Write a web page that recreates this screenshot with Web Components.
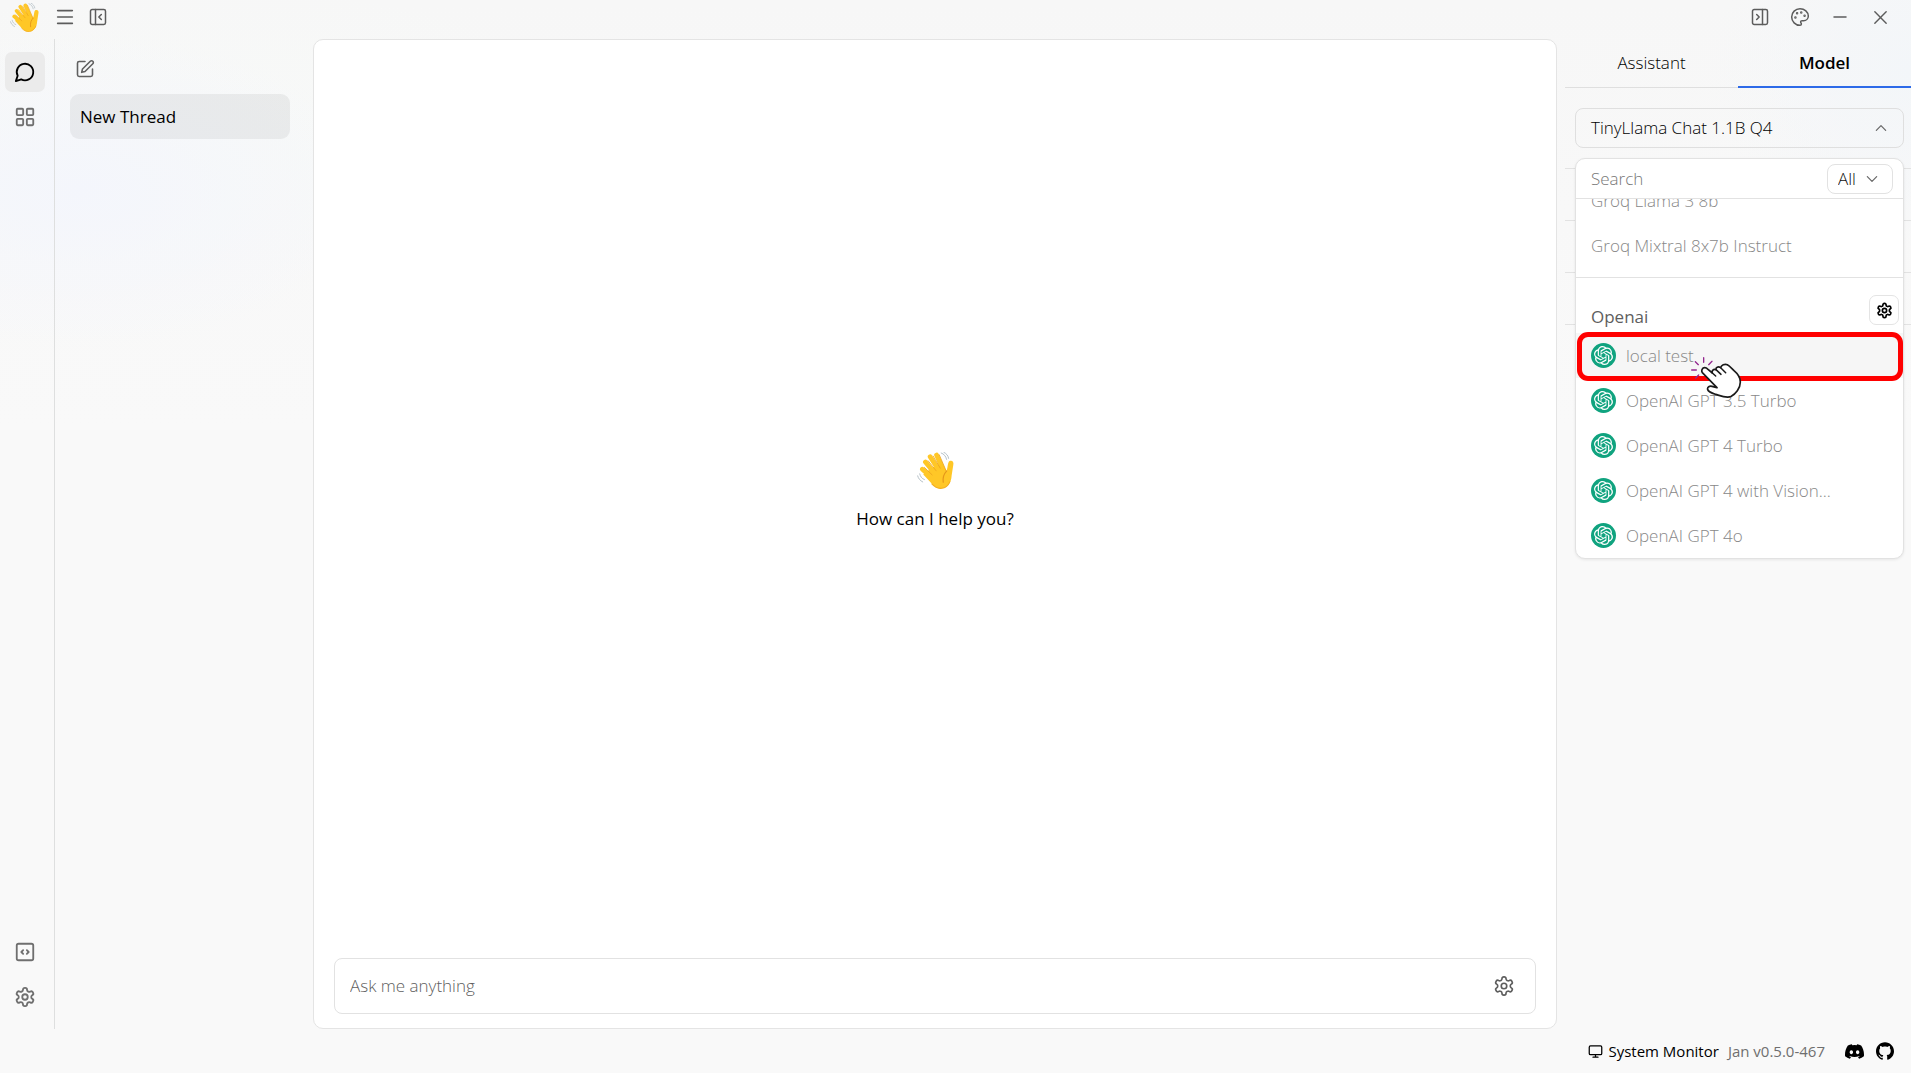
<!DOCTYPE html>
<html lang="en">
<head>
<meta charset="utf-8">
<title>Jan</title>
<style>
html,body{height:100%;margin:0}
body{font-family:"Open Sans","Noto Sans",sans-serif;font-size:17px;line-height:24px;color:#111;overflow:hidden}
</style>
</head>
<body>
<jan-app></jan-app>
<script>
const ICONS={
menu:'<path d="M4 5h16M4 12h16M4 19h16"/>',
panelLeft:'<rect x="3" y="3" width="18" height="18" rx="2"/><path d="M9 3v18M16 15l-3-3 3-3"/>',
panelRight:'<rect x="3" y="3" width="18" height="18" rx="2"/><path d="M15 3v18M8 9l3 3-3 3"/>',
palette:'<circle cx="13.5" cy="6.5" r=".6"/><circle cx="17.5" cy="10.5" r=".6"/><circle cx="8.5" cy="7.5" r=".6"/><circle cx="6.5" cy="12.5" r=".6"/><path d="M12 2C6.5 2 2 6.5 2 12s4.500 10 10 10c.926 0 1.648-.746 1.648-1.688 0-.437-.18-.835-.437-1.125-.29-.289-.438-.652-.438-1.125a1.640 1.640 0 0 1 1.668-1.668h1.996c3.051 0 5.555-2.503 5.555-5.554C21.965 6.012 17.461 2 12 2z"/>',
minus:'<path d="M4 12h16"/>',
close:'<path d="M4 4l16 16M20 4L4 20"/>',
chat:'<path d="M7.900 20A9 9 0 1 0 4 16.100L2 22Z"/>',
grid:'<rect x="3" y="3" width="7" height="7" rx="1"/><rect x="14" y="3" width="7" height="7" rx="1"/><rect x="14" y="14" width="7" height="7" rx="1"/><rect x="3" y="14" width="7" height="7" rx="1"/>',
code:'<path d="m10 10-2 2 2 2M14 14l2-2-2-2"/><rect x="3" y="3" width="18" height="18" rx="2"/>',
gear:'<path d="M12.220 2h-.44a2 2 0 0 0-2 2v.18a2 2 0 0 1-1 1.730l-.43.25a2 2 0 0 1-2 0l-.15-.08a2 2 0 0 0-2.730.73l-.22.38a2 2 0 0 0 .73 2.730l.15.1a2 2 0 0 1 1 1.720v.51a2 2 0 0 1-1 1.740l-.15.09a2 2 0 0 0-.73 2.730l.22.38a2 2 0 0 0 2.730.73l.15-.08a2 2 0 0 1 2 0l.43.25a2 2 0 0 1 1 1.730V20a2 2 0 0 0 2 2h.44a2 2 0 0 0 2-2v-.18a2 2 0 0 1 1-1.730l.43-.25a2 2 0 0 1 2 0l.15.08a2 2 0 0 0 2.730-.73l.22-.39a2 2 0 0 0-.73-2.730l-.15-.08a2 2 0 0 1-1-1.740v-.5a2 2 0 0 1 1-1.740l.15-.09a2 2 0 0 0 .73-2.730l-.22-.38a2 2 0 0 0-2.730-.73l-.15.08a2 2 0 0 1-2 0l-.43-.25a2 2 0 0 1-1-1.730V4a2 2 0 0 0-2-2z"/><circle cx="12" cy="12" r="3"/>',
edit:'<path d="M12 3H5a2 2 0 0 0-2 2v14a2 2 0 0 0 2 2h14a2 2 0 0 0 2-2v-7"/><path d="M18.375 2.625a2.121 2.121 0 1 1 3 3L12 15l-4 1 1-4Z"/>',
up:'<path d="m5 15.500 7-7 7 7"/>',
down:'<path d="m5 8.500 7 7 7-7"/>',
monitor:'<rect x="2" y="3" width="20" height="14" rx="2"/><path d="M8 21h8M12 17v4"/>'
};
const FILLED={
discord:'<path d="M20.317 4.370a19.791 19.791 0 0 0-4.885-1.515.074.074 0 0 0-.079.037c-.21.375-.444.864-.608 1.250a18.270 18.270 0 0 0-5.487 0 12.640 12.640 0 0 0-.617-1.250.077.077 0 0 0-.079-.037A19.736 19.736 0 0 0 3.677 4.370a.07.07 0 0 0-.032.027C.533 9.046-.32 13.580.099 18.058a.082.082 0 0 0 .031.057 19.900 19.900 0 0 0 5.993 3.030.078.078 0 0 0 .084-.028 14.090 14.090 0 0 0 1.226-1.994.076.076 0 0 0-.041-.106 13.107 13.107 0 0 1-1.872-.892.077.077 0 0 1-.008-.128c.126-.094.252-.192.372-.292a.074.074 0 0 1 .077-.01c3.928 1.793 8.180 1.793 12.062 0a.074.074 0 0 1 .078.01c.12.098.246.198.373.292a.077.077 0 0 1-.006.127 12.299 12.299 0 0 1-1.873.892.077.077 0 0 0-.041.107c.36.698.772 1.362 1.225 1.993a.076.076 0 0 0 .084.028 19.839 19.839 0 0 0 6.002-3.030.077.077 0 0 0 .032-.054c.5-5.177-.838-9.674-3.549-13.660a.061.061 0 0 0-.031-.03zM8.020 15.330c-1.183 0-2.157-1.085-2.157-2.419 0-1.333.956-2.419 2.157-2.419 1.210 0 2.176 1.096 2.157 2.420 0 1.333-.956 2.418-2.157 2.418zm7.975 0c-1.183 0-2.157-1.085-2.157-2.419 0-1.333.955-2.419 2.157-2.419 1.210 0 2.176 1.096 2.157 2.420 0 1.333-.946 2.418-2.157 2.418z"/>',
github:'<path d="M12 .297c-6.630 0-12 5.373-12 12 0 5.303 3.438 9.800 8.205 11.385.6.113.82-.258.82-.577 0-.285-.01-1.040-.015-2.040-3.338.724-4.042-1.610-4.042-1.610C4.422 18.070 3.633 17.700 3.633 17.700c-1.087-.744.084-.729.084-.729 1.205.084 1.838 1.236 1.838 1.236 1.070 1.835 2.809 1.305 3.495.998.108-.776.417-1.305.76-1.605-2.665-.3-5.466-1.332-5.466-5.930 0-1.310.465-2.380 1.235-3.220-.135-.303-.54-1.523.105-3.176 0 0 1.005-.322 3.300 1.230.96-.267 1.980-.399 3-.405 1.020.006 2.040.138 3 .405 2.280-1.552 3.285-1.230 3.285-1.230.645 1.653.24 2.873.12 3.176.765.84 1.230 1.910 1.230 3.220 0 4.610-2.805 5.625-5.475 5.920.42.36.81 1.096.81 2.220 0 1.606-.015 2.896-.015 3.286 0 .315.21.69.825.57C20.565 22.092 24 17.592 24 12.297c0-6.627-5.373-12-12-12"/>',
openai:'<path d="M22.282 9.821a5.985 5.985 0 0 0-.516-4.910 6.046 6.046 0 0 0-6.510-2.900A6.065 6.065 0 0 0 4.981 4.182a5.985 5.985 0 0 0-3.998 2.900 6.046 6.046 0 0 0 .743 7.097 5.980 5.980 0 0 0 .51 4.911 6.051 6.051 0 0 0 6.515 2.900A5.985 5.985 0 0 0 13.260 24a6.056 6.056 0 0 0 5.772-4.206 5.990 5.990 0 0 0 3.998-2.900 6.056 6.056 0 0 0-.748-7.073zM13.260 22.430a4.476 4.476 0 0 1-2.876-1.040l.141-.081 4.779-2.758a.795.795 0 0 0 .393-.681v-6.737l2.020 1.169a.071.071 0 0 1 .038.052v5.583a4.504 4.504 0 0 1-4.495 4.493zM3.600 18.304a4.470 4.470 0 0 1-.535-3.014l.142.085 4.783 2.759a.771.771 0 0 0 .78 0l5.843-3.369v2.332a.08.08 0 0 1-.033.062L9.740 19.950a4.500 4.500 0 0 1-6.140-1.646zM2.341 7.896a4.485 4.485 0 0 1 2.365-1.973V11.600a.766.766 0 0 0 .388.677l5.815 3.354-2.020 1.169a.076.076 0 0 1-.071 0l-4.830-2.787A4.504 4.504 0 0 1 2.341 7.872zm16.596 3.856l-5.833-3.388L15.119 7.200a.076.076 0 0 1 .071 0l4.830 2.791a4.494 4.494 0 0 1-.676 8.105v-5.678a.79.79 0 0 0-.407-.667zm2.011-3.024l-.142-.085-4.774-2.782a.776.776 0 0 0-.785 0L9.409 9.230V6.897a.066.066 0 0 1 .028-.061l4.830-2.787a4.500 4.500 0 0 1 6.681 4.660zM8.307 12.863l-2.020-1.164a.08.08 0 0 1-.038-.057V6.074a4.500 4.500 0 0 1 7.376-3.454l-.142.081L8.704 5.460a.795.795 0 0 0-.393.681zm1.097-2.365l2.602-1.500 2.607 1.500v2.999l-2.597 1.500-2.607-1.500z"/>'
};
const define=(name,html,setup)=>{
  const t=document.createElement('template');t.innerHTML=html;
  customElements.define(name,class extends HTMLElement{
    constructor(){super();this.attachShadow({mode:'open'}).append(t.content.cloneNode(true))}
    connectedCallback(){if(setup)setup(this,this.shadowRoot)}
  });
};
const RESET=':host,*{box-sizing:border-box}button,input,textarea,select{font:inherit;color:inherit;background:none;border:0;padding:0;margin:0;outline:0}button{display:flex;align-items:center;justify-content:center}';

/* <jan-icon name size weight> */
define('jan-icon','<style>:host{display:inline-flex;flex:none}svg{display:block}</style>',(el,root)=>{
  const n=el.getAttribute('name'),s=el.getAttribute('size')||20,w=el.getAttribute('weight')||2,f=FILLED[n];
  const s2=document.createElement('span');
  s2.innerHTML=`<svg aria-hidden="true" width="${s}" height="${s}" viewBox="0 0 24 24" ${f?'fill="currentColor"':`fill="none" stroke="currentColor" stroke-width="${w}" stroke-linecap="round" stroke-linejoin="round"`}>${f||ICONS[n]}</svg>`;
  root.append(s2.firstChild);
});

/* waving hand */
define('jan-wave',`<style>:host{display:block;flex:none;width:var(--size,37px);height:var(--size,37px)}svg{display:block;width:100%;height:100%}</style>
<svg viewBox="0 0 110 110" aria-hidden="true" fill="none" stroke-linecap="round" stroke-linejoin="round">
<g stroke="#ffc727" stroke-width="14"><path d="M16 51L50 82M25 30L60 72M39 14L70 62M58 9L80 58"/></g>
<path d="M30 64L36 50 72 38 88 56C92 44 91 30 97 27C105 24 110 30 108 38L103 70C102 92 90 109 70 109C56 109 47 98 38 88L18 66Z" fill="#ffc727"/>
<g stroke="#eda41f" stroke-width="2.500"><path d="M22 46L45 68M33 26L57 56M48 12L69 48M66 8L87 57"/></g>
<path d="M88 57C80 65 76 75 78 90" stroke="#e5971b" stroke-width="3.500"/>
<path d="M44 95C54 106 63 109 73 108C84 107 93 100 98 88" stroke="#f3ae20" stroke-width="3"/>
<g stroke="#a8b5bd" stroke-width="2.500"><path d="M72 3C80 6 86 12 88 22M80 1C88 5 93 11 94 19M2 71C4 79 9 85 17 89M8 65C10 73 14 79 22 82"/></g>
</svg>`);

define('title-bar',`<style>${RESET}
:host{display:flex;justify-content:space-between;height:39px;padding:0 21px 5px 10px;align-items:center;color:#5c5c5c}
div{display:flex;align-items:center}.l{gap:13px}.r{gap:20px}jan-wave{--size:29px;margin-right:3px}button{width:20px;height:20px}</style>
<div class="l"><jan-wave></jan-wave><button aria-label="Menu"><jan-icon name="menu" size="22" weight="1.800"></jan-icon></button><button aria-label="Collapse left panel"><jan-icon name="panelLeft" weight="1.800"></jan-icon></button></div>
<div class="r"><button aria-label="Collapse right panel"><jan-icon name="panelRight" weight="1.800"></jan-icon></button><button aria-label="Theme"><jan-icon name="palette" weight="1.800"></jan-icon></button><button aria-label="Minimize"><jan-icon name="minus" size="18"></jan-icon></button><button aria-label="Close"><jan-icon name="close" size="17"></jan-icon></button></div>`);

define('nav-rail',`<style>${RESET}
:host{display:flex;flex-direction:column;justify-content:space-between;width:55px;flex:none;padding:13px 9px 12px 5px;border-right:1px solid #dedfdf;color:#6f6f6f}
nav{display:flex;flex-direction:column;gap:5px}button{width:40px;height:40px;border-radius:7px}.on{background:#ebebeb;color:#000}</style>
<nav><button class="on" aria-label="Thread"><jan-icon name="chat" size="22"></jan-icon></button><button aria-label="Hub"><jan-icon name="grid" size="22"></jan-icon></button></nav>
<nav><button aria-label="Local API Server"><jan-icon name="code" size="22"></jan-icon></button><button aria-label="Settings"><jan-icon name="gear" size="22"></jan-icon></button></nav>`);

define('thread-list',`<style>${RESET}
:host{display:flex;flex-direction:column;align-items:stretch;width:248px;flex:none;padding:20px 13px 0 15px;gap:15px;color:#606060}
.new{width:20px;height:20px;margin-left:5px}.t{height:45px;padding:0 10px;border-radius:9px;background:rgba(0,0,0,.055);color:#000;justify-content:flex-start;font-weight:500}</style>
<button class="new" aria-label="New thread"><jan-icon name="edit" weight="1.900"></jan-icon></button><button class="t"><slot></slot></button>`);

define('chat-card',`<style>${RESET}
:host{display:flex;flex-direction:column;flex:1;min-width:0;background:#fff;border:1px solid #e4e4e4;border-radius:10px;padding:0 20px 14px}
.mid{flex:1;display:flex;flex-direction:column;align-items:center;justify-content:center;gap:18px;padding-bottom:16px;color:#000;font-weight:500}
.box{display:flex;align-items:center;height:56px;border:1px solid #e2e2e2;border-radius:8px;padding:0 20px 0 15px;color:#5e5e5e}
textarea{flex:1;height:24px;resize:none;overflow:hidden;font-weight:300}textarea::placeholder{color:#606060;opacity:1}
button{width:22px;height:22px}</style>
<div class="mid"><jan-wave></jan-wave><div>How can I help you?</div></div>
<div class="box"><textarea rows="1" aria-label="Message" placeholder="Ask me anything"></textarea><button aria-label="Chat settings"><jan-icon name="gear" size="22" weight="1.800"></jan-icon></button></div>`);

define('model-option',`<style>${RESET}
:host{display:block}button{width:100%;height:45px;padding:0 15px;gap:10px;justify-content:flex-start;color:#888;font-weight:300;white-space:nowrap}
:host([active]) button{background:#f6f6f6}
i{display:none;width:25px;height:25px;border-radius:50%;background:#10a37f;color:#fff;align-items:center;justify-content:center;flex:none}
:host([openai]) i{display:flex}</style>
<button role="option"><i><jan-icon name="openai" size="19"></jan-icon></i><span><slot></slot></span></button>`);

define('click-pointer',`<style>:host{display:block;width:52px;height:44px;pointer-events:none}svg{display:block}</style>
<svg width="52" height="44" viewBox="420 462 156 132" aria-hidden="true" stroke-linecap="round" stroke-linejoin="round">
<g stroke="#93278f" stroke-width="4" fill="none"><path d="M461 470v14M486 481l-10 10M436 482l9 9M425 507h14M446 522l-9 9"/></g>
<path d="M457 515C453 508 457 500 464 500C468 500 471 502 474 505L487 516C485 509 490 503 498 506C497 499 504 495 512 500C514 492 524 488 532 491C538 494 543 500 552 509C564 519 571 528 571 543C571 563 556 579 544 586C531 593 513 585 497 580C487 577 476 574 473 566C471 558 479 554 486 556L501 560Z" fill="#fff" stroke="#1a1a1a" stroke-width="5"/>
<path d="M487 516L497 525M498 506L513 520M512 500L527 515" fill="none" stroke="#1a1a1a" stroke-width="4.500"/>
</svg>`);

define('model-menu',`<style>${RESET}
:host{display:block;background:#fff;border:1px solid #e2e2e2;border-radius:10px;box-shadow:0 1px 3px rgba(0,0,0,.08)}
.search{display:flex;align-items:center;height:40px;border-bottom:1px solid #e2e2e2;padding:0 10px 0 15px}
input{flex:1;min-width:0;font-weight:300}input::placeholder{color:#777;opacity:1}
.sel{display:grid;align-items:center;width:66px;height:30px;border:1px solid #e2e2e2;border-radius:8px}
.sel>*{grid-area:1/1}select{appearance:none;width:100%;height:28px;padding-left:10px;color:#111;font-weight:300}.sel jan-icon{justify-self:end;margin-right:12px;color:#666;pointer-events:none}
.list{overflow:hidden;border-radius:0 0 10px 10px}.groq{margin-top:-21px;padding-bottom:9px;border-bottom:1px solid #e2e2e2}
.head{display:flex;justify-content:space-between;align-items:flex-start;height:55px;padding:17px 4px 0 15px}
h3{margin:10px 0 0;font-size:17px;line-height:24px;font-weight:500;color:#5e5e5e}
.head button{width:30px;height:30px;border:1px solid #e4e4e4;border-radius:7px;color:#000}
.hit{position:relative}
.ring{position:absolute;inset:-1px 0 -3px 1px;border:5px solid #f00;border-radius:11px;pointer-events:none}
click-pointer{position:absolute;left:114px;top:22px;z-index:2}</style>
<div class="search"><input aria-label="Search models" placeholder="Search"><label class="sel"><select aria-label="Filter"><option>All</option><option>Local</option><option>Remote</option></select><jan-icon name="down" size="16" weight="1.800"></jan-icon></label></div>
<div class="list" role="listbox" aria-label="Models">
<div class="groq"><model-option>Groq Llama 3 8b</model-option><model-option>Groq Mixtral 8x7b Instruct</model-option></div>
<div class="head"><h3>Openai</h3><button aria-label="Openai settings"><jan-icon name="gear" size="17" weight="2.400"></jan-icon></button></div>
<div class="hit"><model-option openai active>local test</model-option><div class="ring"></div><click-pointer></click-pointer></div>
<model-option openai>OpenAI GPT 3.5 Turbo</model-option><model-option openai>OpenAI GPT 4 Turbo</model-option><model-option openai>OpenAI GPT 4 with Vision...</model-option><model-option openai>OpenAI GPT 4o</model-option>
</div>`);

define('side-panel',`<style>${RESET}
:host{display:flex;flex-direction:column;width:346px;flex:none}
.tabs{display:flex;height:49px;border-bottom:1px solid #dfdfdf;color:#000}.tabs button{flex:1;font-weight:300;height:49px;padding-bottom:2px}.tabs .on{font-weight:600;padding:0;border-bottom:2px solid #2d6ae8}
.pick{position:relative;padding:20px 7px 20px 10px;border-bottom:1px solid #e2e2e2}
.cur{width:100%;height:40px;border:1px solid #dfdfdf;border-radius:8px;justify-content:space-between;padding:0 14px 0 15px;font-weight:300;color:#000}
.cur jan-icon{color:#666}.row{height:52px;border-bottom:1px solid #e2e2e2}
model-menu{position:absolute;top:70px;left:10px;right:7px}</style>
<div class="tabs" role="tablist"><button role="tab">Assistant</button><button role="tab" class="on" aria-selected="true">Model</button></div>
<div class="pick"><button class="cur" aria-expanded="true">TinyLlama Chat 1.1B Q4<jan-icon name="up" size="16" weight="1.800"></jan-icon></button><model-menu></model-menu></div>
<div class="row"></div><div class="row"></div><div class="row"></div>`);

define('status-bar',`<style>${RESET}
:host{display:flex;align-items:center;justify-content:flex-end;height:44px;padding:0 17px 0 0;font-size:15px;line-height:20px;color:#6f6f6f}
button{gap:5px;color:#000;font-weight:500}.v{margin:0 20px 0 9px}a{color:#000;display:flex}a+a{margin-left:12px}</style>
<button><jan-icon name="monitor" size="15"></jan-icon>System Monitor</button><span class="v">Jan v0.5.0-467</span><a href="#discord" aria-label="Discord"><jan-icon name="discord" size="19"></jan-icon></a><a href="#github" aria-label="GitHub"><jan-icon name="github" size="18"></jan-icon></a>`);

define('jan-app',`<style>
:host{display:flex;flex-direction:column;height:100vh;background:radial-gradient(ellipse 300px 160px at 80px 190px,#f4f6fc,transparent),radial-gradient(ellipse 200px 180px at 100% 70px,#f3f6f9,transparent),radial-gradient(ellipse 420px 150px at 200px 130px,#f7f9f8,transparent),linear-gradient(#f7f7f7,#f9f9f9 40%)}
main{display:flex;flex:1;min-height:0}chat-card{margin:0 8px 0 10px}</style>
<title-bar></title-bar><main><nav-rail></nav-rail><thread-list>New Thread</thread-list><chat-card></chat-card><side-panel></side-panel></main><status-bar></status-bar>`);
</script>
</body>
</html>
